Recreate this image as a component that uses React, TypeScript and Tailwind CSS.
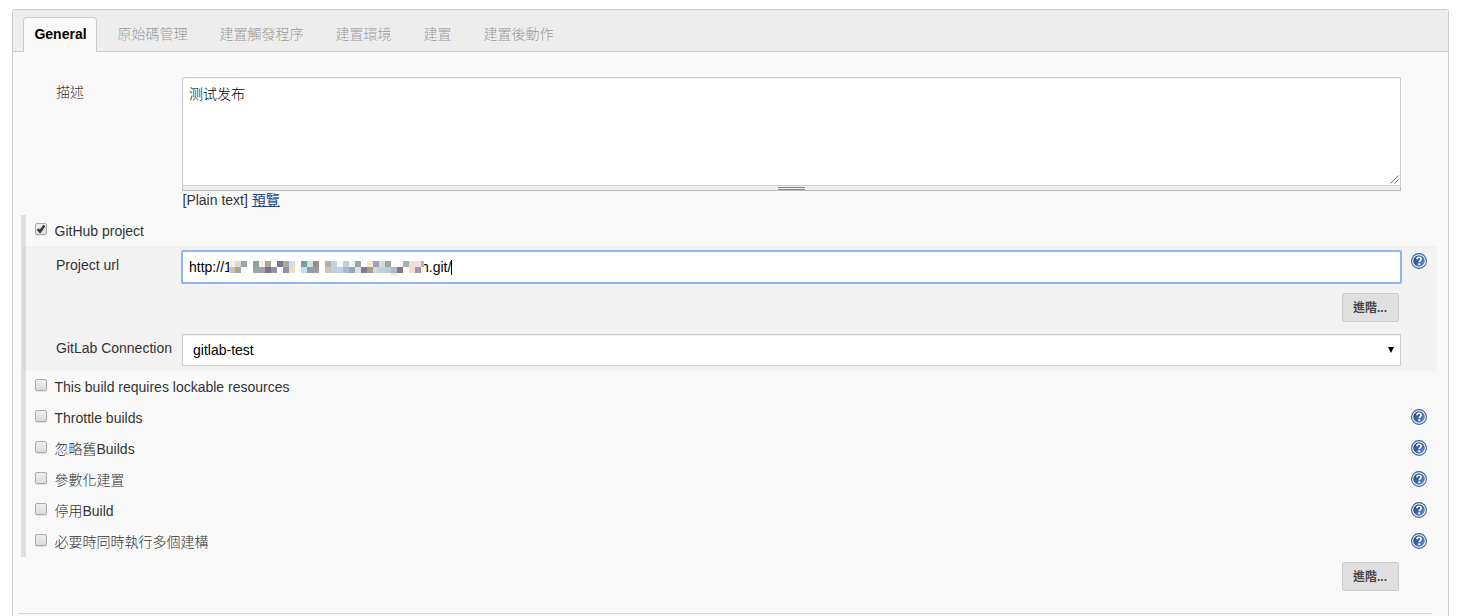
import React from "react";

const TABS = ["原始碼管理", "建置觸發程序", "建置環境", "建置", "建置後動作"];

const OPTIONS = [
  { label: "This build requires lockable resources", help: false },
  { label: "Throttle builds", help: true },
  { label: "忽略舊Builds", help: true },
  { label: "參數化建置", help: true },
  { label: "停用Build", help: true },
  { label: "必要時同時執行多個建構", help: true },
];

// Rows of 6px blocks that hide the middle part of the project url.
const BLOCKS: string[][] = [
  [
    "#fcefd9", "#d9dcdc", "#9ea5a3", "", "#8ba0a2", "#eef3f0", "#aca59f", "", "#7e7192", "#a3aaa2", "#ceddf0",
    "#fff7ec", "#7a9c9c", "#cde4e2", "#9c8d82", "", "#bdaeae", "#c5d5d5", "#f0fbff", "#bcd0da", "#e9f4f4",
    "#a0a5a3", "", "#f2e6cf", "#a69db8", "#d7dcd7", "#a0a59c", "", "", "#9fb3ae", "#f0dede", "#f0e0e0", "#c0b0b0",
  ],
  [
    "#cfc0b8", "#acab92", "#f3fbff", "", "#98a8a6", "#aea0a0", "#7f7290", "#98929a", "", "#8d90a2", "#f3dbb8",
    "", "#bfe3ee", "#989b9f", "#9f9aa0", "", "#cfc3be", "#c0d0e0", "#bad4f0", "#b0b6d0", "#9da4b0", "#d5e4e4",
    "#857888", "#a89a95", "#d5d5cc", "#b0d4e4", "#bcc6d4", "#b0b8c0", "#857888", "#fffaf0", "#f3e0d4", "#a594ac", "#ffffff",
  ],
  [
    "", "", "", "", "", "", "", "", "", "", "", "", "", "", "", "", "", "", "", "", "", "", "", "", "", "", "",
    "#f5ead8",
  ],
];

function Mosaic() {
  return (
    <svg className="relative z-10 -ml-[3px] mt-[5px] block h-[18px] w-[195px] shrink-0" shapeRendering="crispEdges">
      <rect width="195" height="12" fill="#fff" />
      {BLOCKS.map((row, y) =>
        row.map((fill, x) =>
          fill ? <rect key={`${x}-${y}`} x={x * 6} y={y * 6} width="6" height={y === 2 ? 3 : 6} fill={fill} /> : null
        )
      )}
    </svg>
  );
}

function HelpIcon() {
  return (
    <svg className="block h-4 w-4" viewBox="0 0 16 16">
      <defs>
        <linearGradient id="help" x1="0" y1="0" x2="1" y2="1">
          <stop offset="0" stopColor="#1f4683" />
          <stop offset="0.5" stopColor="#3d66a3" />
          <stop offset="1" stopColor="#7ba3d3" />
        </linearGradient>
      </defs>
      <circle cx="8" cy="8" r="7.4" fill="#fff" stroke="#3a609b" strokeWidth="1.1" />
      <circle cx="8" cy="8" r="5.8" fill="url(#help)" />
      <path d="M5.9 6.300C5.900 4.800 6.800 4.200 8 4.200c1.300 0 2.200.7 2.200 1.800C10.200 7.500 8.200 7.600 8.200 9.300" fill="none" stroke="#fff" strokeWidth="1.6" />
      <rect x="7.300" y="10.300" width="1.800" height="1.700" fill="#fff" />
    </svg>
  );
}

function Checkbox({ checked = false }: { checked?: boolean }) {
  return (
    <span className="block h-[12px] w-[12px] rounded-[2px] border border-[#acacac] bg-linear-to-b from-[#eeeeee] to-[#dcdcdc] shadow-[0_1px_1px_rgba(0,0,0,0.1)]">
      {checked && (
        <svg className="block h-[10px] w-[10px]" viewBox="0 0 10 10">
          <path d="M1.600 5.200 4 7.600 8.400 1.600" fill="none" stroke="#3a3a3a" strokeWidth="2.600" />
        </svg>
      )}
    </span>
  );
}

function AdvancedButton() {
  return (
    <button className="h-[29px] w-[57px] rounded-[2px] border border-[#cccccc] bg-[#e0e0e0] pr-px text-center text-xs leading-[26px] font-bold text-[#4d4545]">
      進階...
    </button>
  );
}

function OptionRow({ label, help, checked }: { label: string; help: boolean; checked?: boolean }) {
  return (
    <div className="flex h-[31px] pl-[9px] pr-[10px]">
      <div className="pt-[8px]">
        <Checkbox checked={checked} />
      </div>
      <div className="ml-[7.5px] grow pt-[6px] leading-5 font-light whitespace-nowrap">{label}</div>
      {help && (
        <div className="pt-[7px]">
          <HelpIcon />
        </div>
      )}
    </div>
  );
}

export default function App() {
  return (
    <div className="h-[616px] w-[1458px] overflow-hidden bg-white pt-[9px] pl-[12px] font-['Liberation_Sans','Noto_Sans_CJK_TC',sans-serif] text-sm text-[#333333]">
      <div className="h-[620px] w-[1437px] rounded-t-[3px] border border-[#cccccc] bg-[#f9f9f9]">
        <div className="flex h-[42px] items-end border-b border-[#cccccc] bg-[#ededed] pl-[10px] text-[#999999]">
          <div className="-mb-px h-[35px] w-[74px] rounded-t-[4px] border border-b-0 border-[#cccccc] bg-[#f9f9f9] pl-px text-center leading-[33px] font-bold text-black">
            General
          </div>
          <div className="ml-[20.5px] flex h-[34px] gap-[32px] leading-[34px] font-light">
            {TABS.map((tab) => (
              <span key={tab}>{tab}</span>
            ))}
          </div>
        </div>

        <div className="flex h-[163px] pt-[25px] pl-[43px]">
          <div className="w-[126px] pt-[5px] leading-5 font-light">描述</div>
          <div className="w-[1219px]">
            <div className="flex h-[109px] items-end justify-between rounded-t-[2px] border border-[#cccccc] bg-white shadow-[inset_0_1px_1px_rgba(0,0,0,0.06)]">
              <span className="self-start pt-[6px] pl-[6px] font-['Liberation_Sans','Noto_Sans_CJK_SC',sans-serif] leading-5 font-light text-black">
                测试发布
              </span>
              <svg className="mr-px mb-px block h-[9px] w-[9px]" viewBox="0 0 9 9">
                <path d="M0.500 8.500 8.500 0.500M4.500 8.500 8.500 4.500" stroke="#555" strokeWidth="0.900" />
              </svg>
            </div>
            <div className="flex h-[5px] justify-center border-x border-b border-[#bbbbbb] bg-[#eeeeee]">
              <div className="mt-px h-[3px] w-[27px] border-y border-[#888888]" />
            </div>
            <div className="pl-[0.5px] leading-[19px]">
              [Plain text] <span className="text-[#204a87] underline">預覽</span>
            </div>
          </div>
        </div>

        <div className="ml-[8px] h-[342px] w-[1416px] border-l-[5px] border-[#dfdfdf]">
          <OptionRow label="GitHub project" help={false} checked />
          <div className="-ml-[3px] h-[125px] border-l-[3px] border-[#d8d8d8] bg-[#f2f2f2]">
            <div className="flex pt-[4px]">
              <div className="w-[155px] pt-[5px] pl-[30px] leading-5">Project url</div>
              <div className="flex h-[34px] w-[1221px] rounded-[2px] border-2 border-[#8fb4ef] bg-white pl-[6px] leading-[30px] text-black">
                <div className="flex items-center">
                  <span className="w-[43px]">http://1</span>
                  <Mosaic />
                  <span className="-ml-[3px]">h.git/</span>
                  <span className="h-[15px] w-px bg-black" />
                </div>
              </div>
              <div className="ml-[9px] pt-[3px]">
                <HelpIcon />
              </div>
            </div>
            <div className="flex justify-end pt-[9px] pr-[38px]">
              <AdvancedButton />
            </div>
            <div className="flex pt-[12px]">
              <div className="w-[156px] pt-[4px] pl-[30px] leading-5 whitespace-nowrap">GitLab Connection</div>
              <div className="flex h-[32px] w-[1219px] items-center justify-between border border-[#cccccc] bg-white pr-[6px] pl-[10px] text-black shadow-[inset_0_1px_1px_rgba(0,0,0,0.06)]">
                <span>gitlab-test</span>
                <svg className="block h-[6px] w-[6px]" viewBox="0 0 6 6">
                  <path d="M0 0H6L3 6Z" fill="#000" />
                </svg>
              </div>
            </div>
          </div>
          {OPTIONS.map((option) => (
            <OptionRow key={option.label} {...option} />
          ))}
        </div>

        <div className="flex justify-end pt-[5px] pr-[49px]">
          <AdvancedButton />
        </div>
        <div className="mt-[22px] ml-[5px] h-px w-[1414px] bg-[#d9d9d9]" />
      </div>
    </div>
  );
}
